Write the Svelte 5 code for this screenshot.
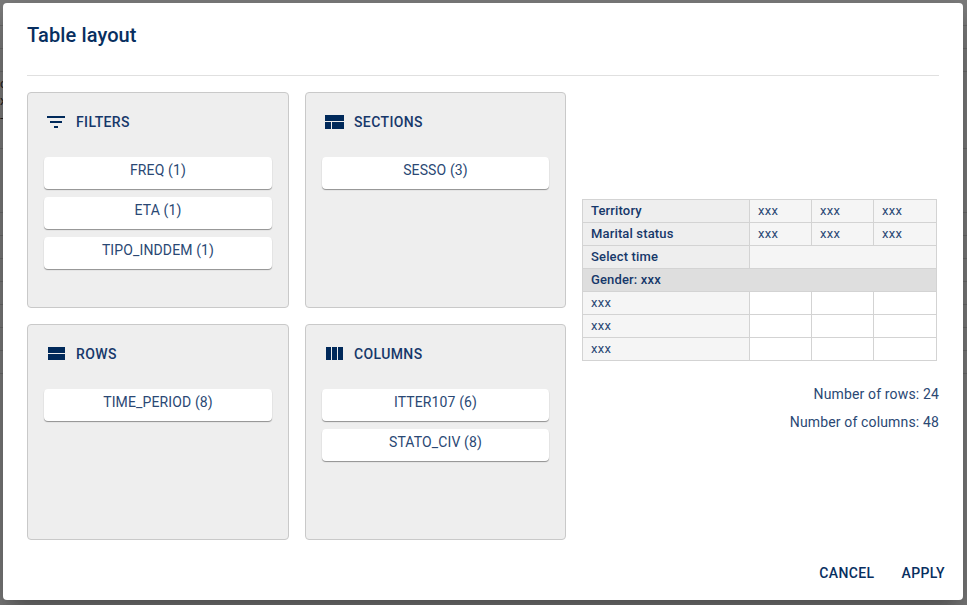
<script>
  const panels = [
    { name: 'Filters', icon: 'filters', items: ['FREQ (1)', 'ETA (1)', 'TIPO_INDDEM (1)'] },
    { name: 'Sections', icon: 'sections', items: ['SESSO (3)'] },
    { name: 'Rows', icon: 'rows', items: ['TIME_PERIOD (8)'] },
    { name: 'Columns', icon: 'columns', items: ['ITTER107 (6)', 'STATO_CIV (8)'] }
  ];
  const paths = {
    filters: 'M10 18h4v-2h-4v2zM3 6v2h18V6H3zm3 7h12v-2H6v2z',
    sections: 'M3 5h19v6H3zM3 12h6v7H3zM10 12h12v7H10z',
    rows: 'M4 5h17v6H4zM4 12h17v6H4z',
    columns: 'M4 5h5v13H4zM10 5h5v13h-5zM16 5h5v13h-5z'
  };
  const headers = ['Territory', 'Marital status'];
  const three = [0, 1, 2];
  const rules = [25, 48, 71, 148, 212, 235, 258, 281, 304, 327, 350, 373];
</script>

<div class="backdrop">
  {#each rules as y}<i class="rule" style="top: {y}px"></i>{/each}
  <div class="behind"><span>c</span><span>x</span><span>-</span></div>
  <div class="dialog">
    <h2>Table layout</h2>
    <div class="content">
      <div class="panels">
        {#each panels as panel}
          <section>
            <header>
              <svg viewBox="0 0 24 24" width="24" height="24"><path d={paths[panel.icon]} /></svg>
              <span>{panel.name}</span>
            </header>
            <div class="items">
              {#each panel.items as item}<div class="item">{item}</div>{/each}
            </div>
          </section>
        {/each}
      </div>
      <div class="preview">
        <table>
          <colgroup><col class="first" /><col class="cell" /><col class="cell" /><col class="last" /></colgroup>
          <tbody>
            {#each headers as h}
              <tr><th>{h}</th>{#each three as _}<td class="sub">xxx</td>{/each}</tr>
            {/each}
            <tr><th>Select time</th><td class="sub" colspan="3"></td></tr>
            <tr><th class="group" colspan="4">Gender: xxx</th></tr>
            {#each three as _}
              <tr><td class="sub">xxx</td><td></td><td></td><td></td></tr>
            {/each}
          </tbody>
        </table>
        <div class="counts">
          <div>Number of rows: 24</div>
          <div>Number of columns: 48</div>
        </div>
      </div>
    </div>
    <footer>
      <button>Cancel</button>
      <button>Apply</button>
    </footer>
  </div>
</div>

<style>
  .backdrop {
    position: relative;
    box-sizing: border-box;
    width: 967px;
    height: 605px;
    padding: 3px 4px 5px 3px;
    overflow: hidden;
    background: #7d7d7d;
    font-family: Roboto, sans-serif;
    color: #00295a;
  }
  .rule {
    position: absolute;
    left: 0;
    right: 0;
    height: 1px;
    background: #6c6c6c;
  }
  .behind {
    position: absolute;
    left: 0;
    top: 75px;
    display: flex;
    flex-direction: column;
    font-size: 13px;
    line-height: 17px;
    color: #222;
  }
  .dialog {
    position: relative;
    display: flex;
    flex-direction: column;
    box-sizing: border-box;
    height: 597px;
    background: #fff;
    border-radius: 4px;
    box-shadow: 0 11px 15px -7px rgba(0, 0, 0, 0.2), 0 24px 38px 3px rgba(0, 0, 0, 0.14), 0 9px 46px 8px rgba(0, 0, 0, 0.12);
  }
  h2 {
    box-sizing: border-box;
    height: 73px;
    margin: 0 24px;
    padding-top: 16px;
    border-bottom: 1px solid #e0e0e0;
    font-size: 20px;
    line-height: 32px;
    font-weight: 500;
    letter-spacing: 0.12px;
    color: #082f60;
  }
  .content {
    display: flex;
    gap: 16px;
    padding: 16px 24px 0;
  }
  .panels {
    display: grid;
    grid-template-columns: 262px 261px;
    grid-template-rows: 216px 216px;
    gap: 16px;
  }
  section {
    box-sizing: border-box;
    padding: 16px;
    border: 1px solid #c9c9c9;
    border-radius: 4px;
    background: #eee;
  }
  header {
    display: flex;
    align-items: center;
    gap: 8px;
    height: 26px;
    font-size: 14px;
    font-weight: 500;
    letter-spacing: 0.38px;
    color: #16386a;
    text-transform: uppercase;
  }
  svg {
    fill: #00295a;
  }
  .items {
    display: flex;
    flex-direction: column;
    gap: 8px;
    padding-top: 22px;
  }
  .item {
    box-sizing: border-box;
    height: 32px;
    padding-top: 3px;
    border-radius: 4px;
    background: #fff;
    box-shadow: 0 1px 1px rgba(0, 0, 0, 0.4);
    text-align: center;
    font-size: 14px;
    line-height: 20px;
    letter-spacing: 0.13px;
    color: #2a4874;
  }
  .preview {
    padding-top: 107px;
    width: 357px;
  }
  table {
    width: 355px;
    table-layout: fixed;
    border-collapse: collapse;
    font-size: 13px;
    line-height: 16px;
    letter-spacing: 0.15px;
  }
  .first {
    width: 167px;
  }
  .cell {
    width: 62px;
  }
  tr {
    height: 23px;
  }
  th,
  td {
    box-sizing: border-box;
    height: 23px;
    padding: 0 8px;
    border: 1px solid #d3d3d3;
    text-align: left;
    font-weight: 400;
    color: #2a4874;
  }
  td {
    letter-spacing: 0.3px;
  }
  th {
    background: #eee;
    font-weight: 500;
    color: #16386a;
  }
  .sub {
    background: #f5f5f5;
  }
  .group {
    background: #dedede;
    border-top-color: #c0c0c0;
  }
  .counts {
    padding-top: 19px;
    text-align: right;
    font-size: 14px;
    line-height: 28px;
    letter-spacing: 0.15px;
    color: #2a4874;
  }
  footer {
    display: flex;
    justify-content: flex-end;
    gap: 11px;
    margin-top: auto;
    padding: 0 10px 9px;
  }
  button {
    height: 36px;
    padding: 0 8px;
    border: 0;
    background: none;
    color: #082f60;
    font: 500 14px/36px Roboto, sans-serif;
    letter-spacing: 0.38px;
    text-transform: uppercase;
  }
</style>
